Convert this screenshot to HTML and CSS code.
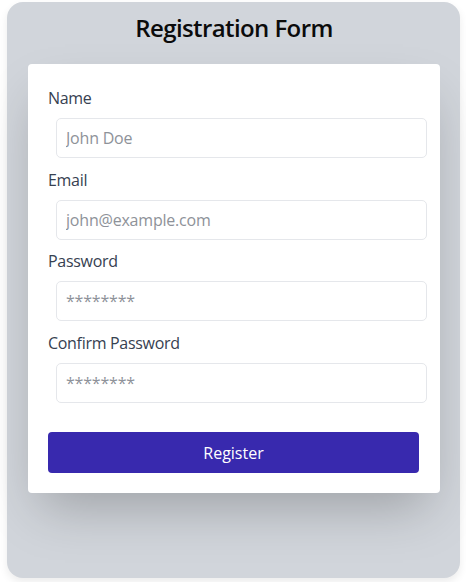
FILE: index.html
```html
<!DOCTYPE html>
<html lang="en">
<head>
<meta charset="utf-8">
<title>Registration Form</title>
<link rel="stylesheet" href="styles.css">
</head>
<body>
<div class="panel">
  <h1 class="title">Registration Form</h1>
  <form class="card">
    <div class="field">
      <label class="label" for="name">Name</label>
      <input class="input" id="name" type="text" placeholder="John Doe">
    </div>
    <div class="field">
      <label class="label" for="email">Email</label>
      <input class="input" id="email" type="email" placeholder="john@example.com">
    </div>
    <div class="field">
      <label class="label" for="pw">Password</label>
      <input class="input" id="pw" type="password" placeholder="********">
    </div>
    <div class="field">
      <label class="label" for="pw2">Confirm Password</label>
      <input class="input" id="pw2" type="password" placeholder="********">
    </div>
    <button class="button" type="button">Register</button>
  </form>
</div>
</body>
</html>
```
FILE: styles.css
```css
html, body {
  margin: 0;
  padding: 0;
  background: #ffffff;
}
body {
  font-family: "Open Sans", "Noto Sans", sans-serif;
  padding: 2px 6px 4px 7px;
}
.panel {
  box-sizing: border-box;
  width: 453px;
  height: 576px;
  background: #d1d5db;
  border-radius: 16px;
  box-shadow: 0 4px 8px rgba(0, 0, 0, 0.08);
  padding: 10px 20px 0 21px;
}
.title {
  margin: 0 0 20px 0;
  font-size: 24px;
  line-height: 32px;
  font-weight: 600;
  color: #0b0b0b;
  text-align: center;
  letter-spacing: -0.6px;
}
.card {
  background: #ffffff;
  border-radius: 4px;
  box-shadow: 0 25px 50px -12px rgba(0, 0, 0, 0.25);
  padding: 21px 20px 20px 20px;
  display: flex;
  flex-direction: column;
}
.field {
  display: flex;
  flex-direction: column;
  margin-bottom: 8.7px;
}
.label {
  font-size: 16px;
  line-height: 24px;
  color: #374151;
  padding-top: 1px;
  margin-bottom: 8px;
  letter-spacing: -0.3px;
}
.input {
  box-sizing: border-box;
  width: 371px;
  height: 40px;
  margin-left: 8px;
  border: 1px solid #e5e7eb;
  border-radius: 5px;
  padding: 0 9px;
  font-family: inherit;
  font-size: 16px;
  letter-spacing: -0.2px;
  color: #374151;
  background: #ffffff;
  outline: none;
}
.input::placeholder {
  color: #8e9299;
}
.button {
  margin-top: 20.2px;
  width: 371px;
  height: 41px;
  border: none;
  border-radius: 4px;
  background: #3829ae;
  color: #ffffff;
  font-family: inherit;
  font-size: 16px;
  padding-top: 2px;
}
```
